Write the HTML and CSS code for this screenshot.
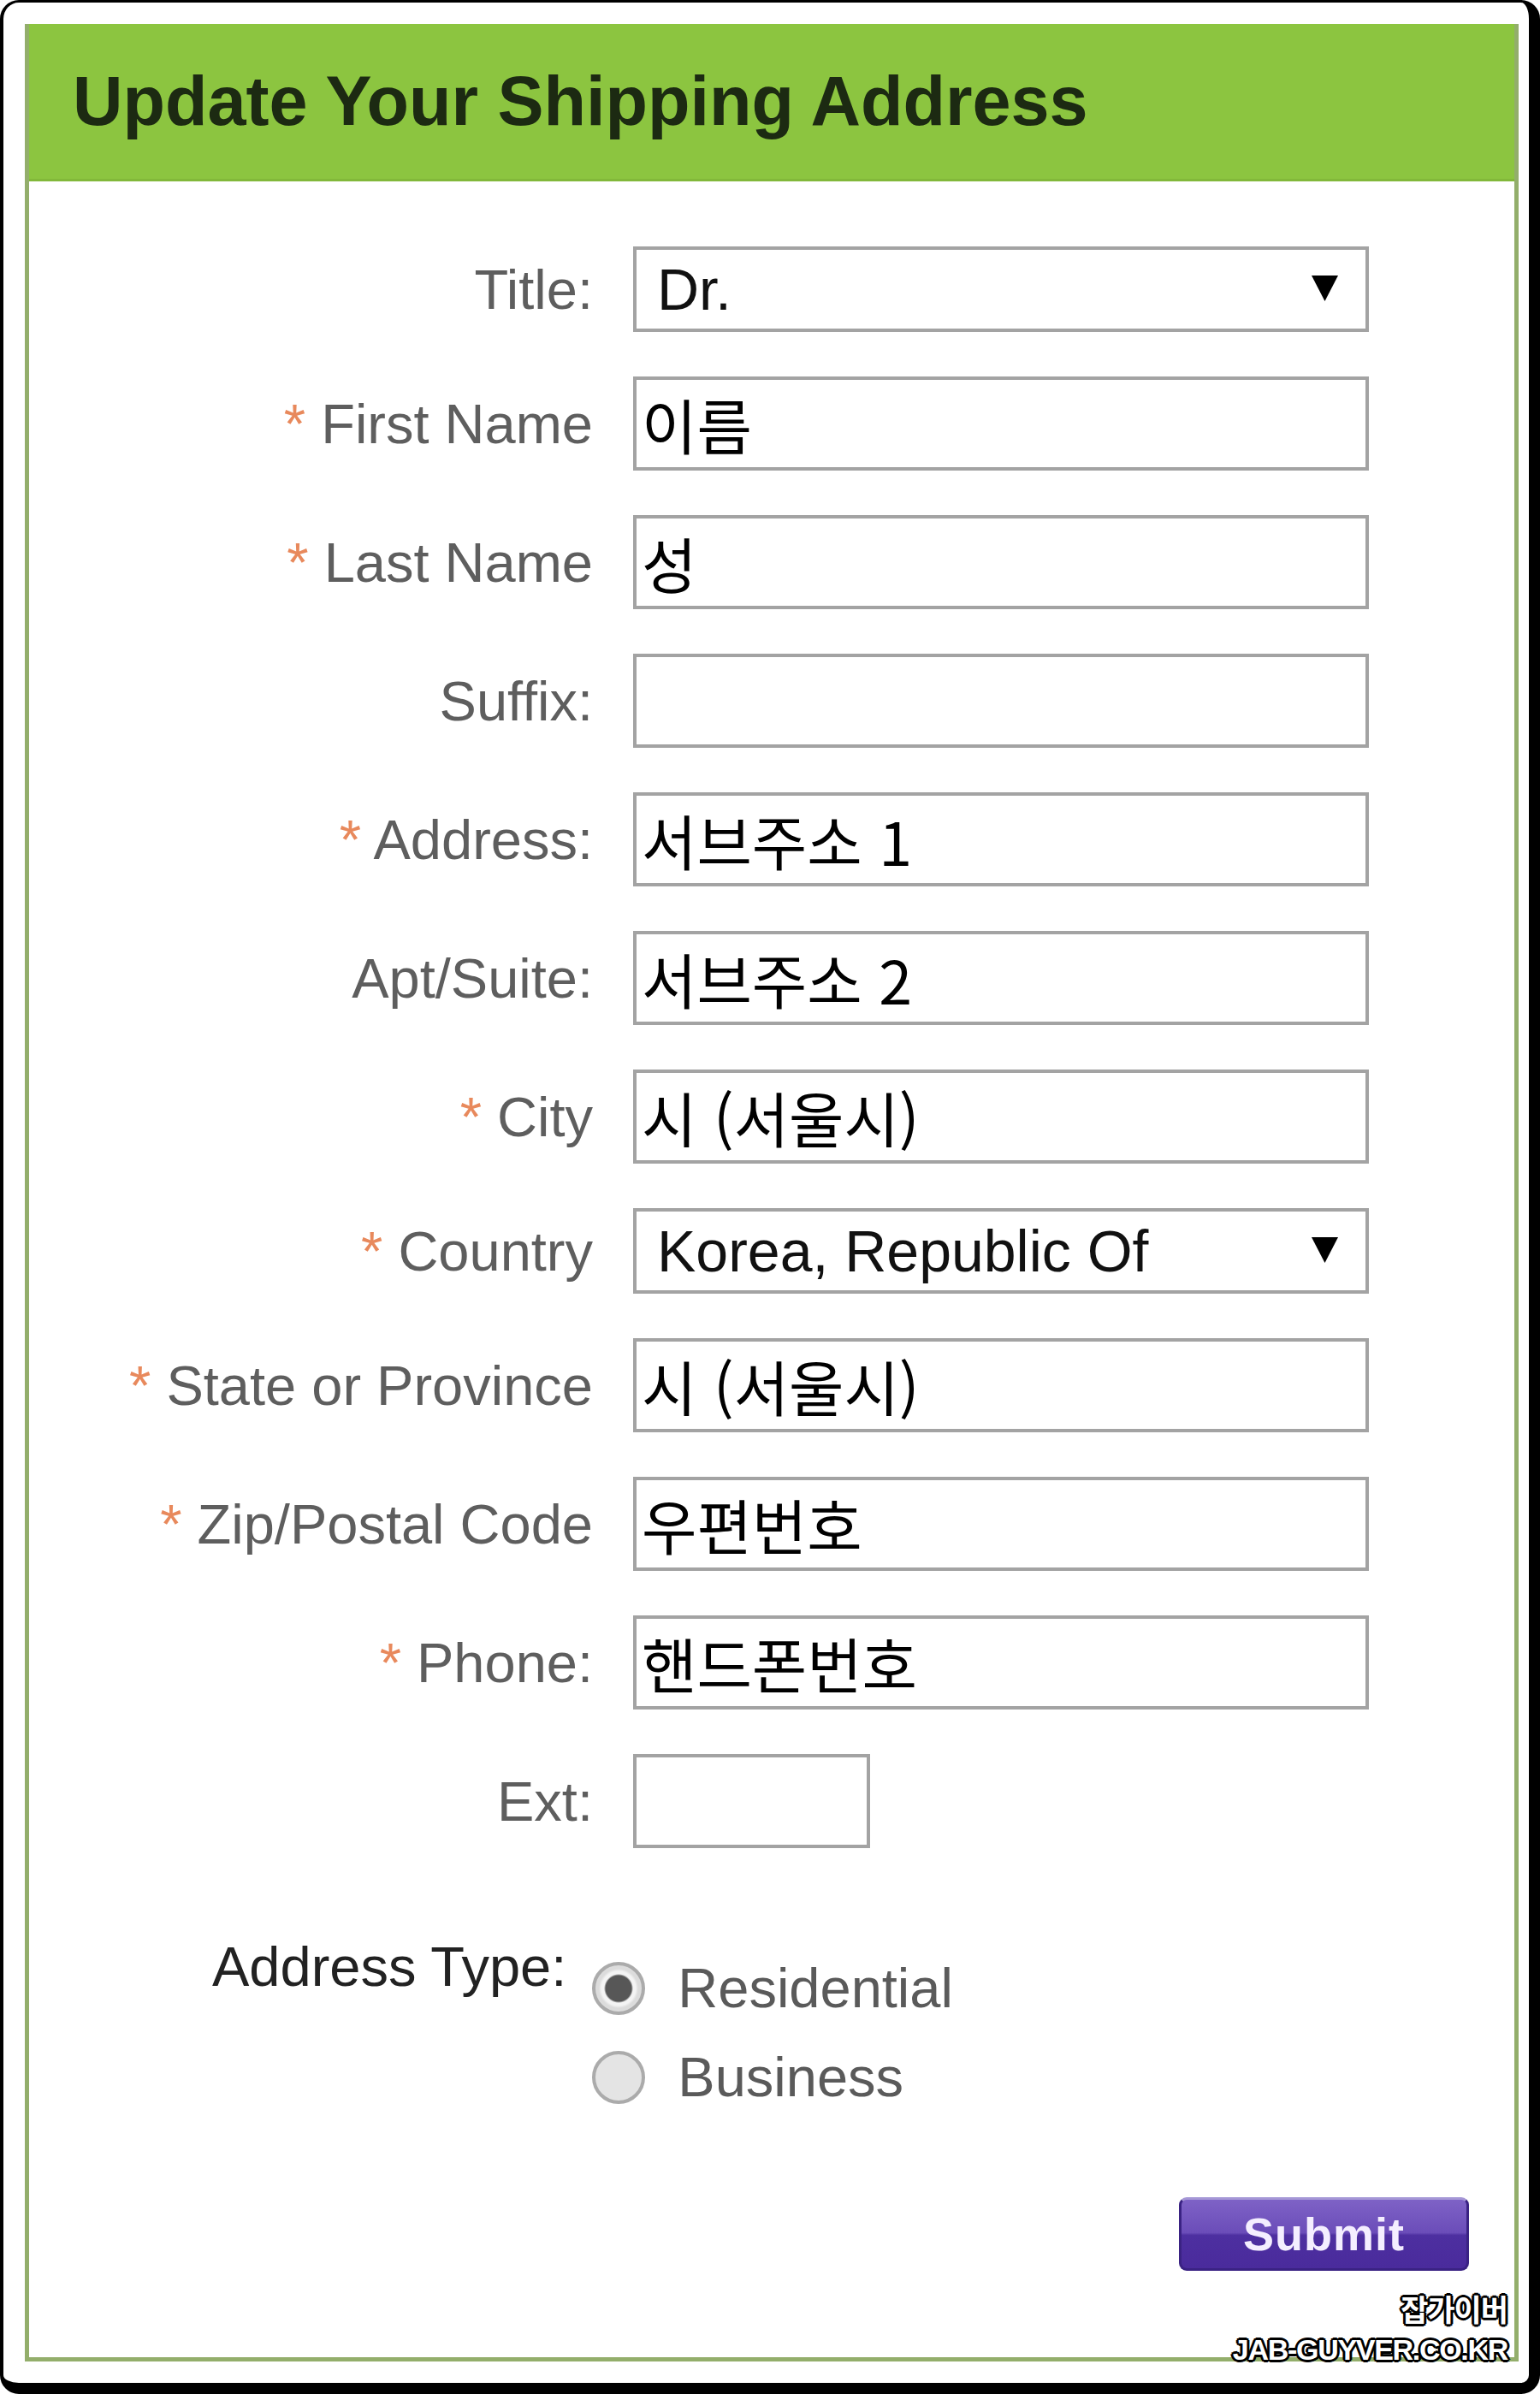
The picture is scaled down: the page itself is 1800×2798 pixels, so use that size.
FILE: index.html
```html
<!DOCTYPE html>
<html lang="ko">
<head>
    <meta charset="UTF-8">
    <meta name="viewport" content="width=device-width, initial-scale=1.0">
    <title>Update Your Shipping Address</title>
    <link rel="stylesheet" href="styles.css">
</head>
<body>
    <div class="card">
        <div class="frame">
            <div class="header">
                <h1>Update Your Shipping Address</h1>
            </div>

            <form class="form">
                <div class="fields">
                    <label class="label">Title:</label>
                    <div class="select">
                        <span>Dr.</span>
                        <svg class="arrow" width="31" height="30" viewBox="0 0 31 30"><polygon points="0,0 31,0 15.5,30" fill="#000"/></svg>
                    </div>

                    <label class="label"><span class="req">*</span> First Name</label>
                    <input class="field" type="text" value="이름">

                    <label class="label"><span class="req">*</span> Last Name</label>
                    <input class="field" type="text" value="성">

                    <label class="label">Suffix:</label>
                    <input class="field" type="text" value="">

                    <label class="label"><span class="req">*</span> Address:</label>
                    <input class="field" type="text" value="서브주소 1">

                    <label class="label">Apt/Suite:</label>
                    <input class="field" type="text" value="서브주소 2">

                    <label class="label"><span class="req">*</span> City</label>
                    <input class="field" type="text" value="시 (서울시)">

                    <label class="label"><span class="req">*</span> Country</label>
                    <div class="select">
                        <span>Korea, Republic Of</span>
                        <svg class="arrow" width="31" height="30" viewBox="0 0 31 30"><polygon points="0,0 31,0 15.5,30" fill="#000"/></svg>
                    </div>

                    <label class="label"><span class="req">*</span> State or Province</label>
                    <input class="field" type="text" value="시 (서울시)">

                    <label class="label"><span class="req">*</span> Zip/Postal Code</label>
                    <input class="field" type="text" value="우편번호">

                    <label class="label"><span class="req">*</span> Phone:</label>
                    <input class="field" type="text" value="핸드폰번호">

                    <label class="label">Ext:</label>
                    <input class="field field-short" type="text" value="">
                </div>

                <!-- Address type -->
                <div class="type-row">
                    <span class="type-label">Address Type:</span>
                    <div class="radios">
                        <label class="radio"><span class="dot checked"></span>Residential</label>
                        <label class="radio"><span class="dot"></span>Business</label>
                    </div>
                </div>

                <div class="actions">
                    <button class="submit" type="button">Submit</button>
                </div>
            </form>
        </div>

        <!-- Watermark -->
        <div class="watermark">
            <div class="wm-ko">잡가이버</div>
            <div class="wm-en">JAB-GUYVER.CO.KR</div>
        </div>
    </div>
</body>
</html>
```

FILE: styles.css
```css
body {
    margin: 0;
    padding: 0;
    background-color: #fff;
    font-family: 'Liberation Sans', Arial, sans-serif;
}

.card {
    position: relative;
    box-sizing: border-box;
    width: 1800px;
    height: 2798px;
    border-style: solid;
    border-color: #000;
    border-width: 3px 13px 13px 4px;
    border-radius: 22px;
    padding: 25px 12px 25px 25px;
    background-color: #fff;
}

.frame {
    border: 5px solid #93ae6b;
    border-top: none;
    background-color: #fff;
}

.header {
    height: 184px;
    background-color: #8cc540;
    border-bottom: 3px solid #82b83a;
    box-sizing: border-box;
    padding-left: 51px;
}

.header h1 {
    margin: 0;
    font-size: 81px;
    font-weight: bold;
    line-height: 181px;
    color: #1c2a12;
}

.form {
    padding: 76px 0 101px;
}

.fields {
    display: grid;
    grid-template-columns: 659px 860px;
    column-gap: 47px;
    row-gap: 52px;
    align-items: center;
}

.label {
    text-align: right;
    font-size: 65px;
    color: #5e5e5e;
    white-space: nowrap;
}

.req {
    color: #e8895c;
}

.field {
    box-sizing: border-box;
    height: 110px;
    width: 860px;
    margin: 0;
    padding: 0 6px;
    border: 4px solid #a3a3a3;
    border-radius: 0;
    outline: none;
    background: #fff;
    font-family: 'Noto Sans CJK KR', 'Liberation Sans', sans-serif;
    font-size: 70px;
    color: #000;
}

.field-short {
    width: 277px;
}

.select {
    box-sizing: border-box;
    height: 100px;
    display: flex;
    align-items: center;
    justify-content: space-between;
    padding: 0 32px 0 24px;
    border: 4px solid #a3a3a3;
    font-size: 68px;
    color: #111;
}

.arrow {
    display: block;
    margin-top: -2px;
}

/* Address type */
.type-row {
    display: flex;
    align-items: flex-start;
    gap: 30px;
    margin-top: 101px;
    padding-left: 214px;
}

.type-label {
    font-size: 65px;
    line-height: 75px;
    color: #222;
}

.radios {
    display: flex;
    flex-direction: column;
    gap: 29px;
    padding-top: 25px;
}

.radio {
    display: flex;
    align-items: center;
    gap: 38px;
    font-size: 65px;
    line-height: 75px;
    color: #5a5a5a;
}

.dot {
    box-sizing: border-box;
    width: 62px;
    height: 62px;
    border-radius: 50%;
    border: 4px solid #ababab;
    background: #e4e4e4;
}

.dot.checked {
    background: radial-gradient(circle, #575757 0 15px, #f4f4f4 17px 20px, #dcdcdc 23px);
}

.actions {
    display: flex;
    justify-content: flex-end;
    padding-right: 53px;
    margin-top: 103px;
}

.submit {
    box-sizing: border-box;
    width: 339px;
    height: 86px;
    border: 3px solid #3a2283;
    border-top-color: #a597d6;
    border-radius: 9px;
    background: linear-gradient(#7e62c6 0%, #6b4db9 48%, #4d2fa0 52%, #4a2b9c 100%);
    font-family: 'Liberation Sans', Arial, sans-serif;
    font-size: 54px;
    font-weight: bold;
    letter-spacing: 1px;
    color: #f4eeff;
    padding: 0;
}

/* Watermark */
.watermark {
    position: absolute;
    right: 25px;
    bottom: 21px;
    text-align: right;
    font-weight: bold;
    color: #fff;
    text-shadow:
        -2px -2px 0 #000, 2px -2px 0 #000, -2px 2px 0 #000, 2px 2px 0 #000,
        0 -3px 0 #000, 0 3px 0 #000, -3px 0 0 #000, 3px 0 0 #000;
}

.wm-ko {
    font-family: 'Noto Sans CJK KR', sans-serif;
    font-size: 35px;
    line-height: 40px;
    letter-spacing: -1px;
    margin-bottom: 10px;
}

.wm-en {
    font-family: 'Liberation Sans', Arial, sans-serif;
    font-size: 34px;
    line-height: 36px;
    letter-spacing: -1.3px;
}
```
